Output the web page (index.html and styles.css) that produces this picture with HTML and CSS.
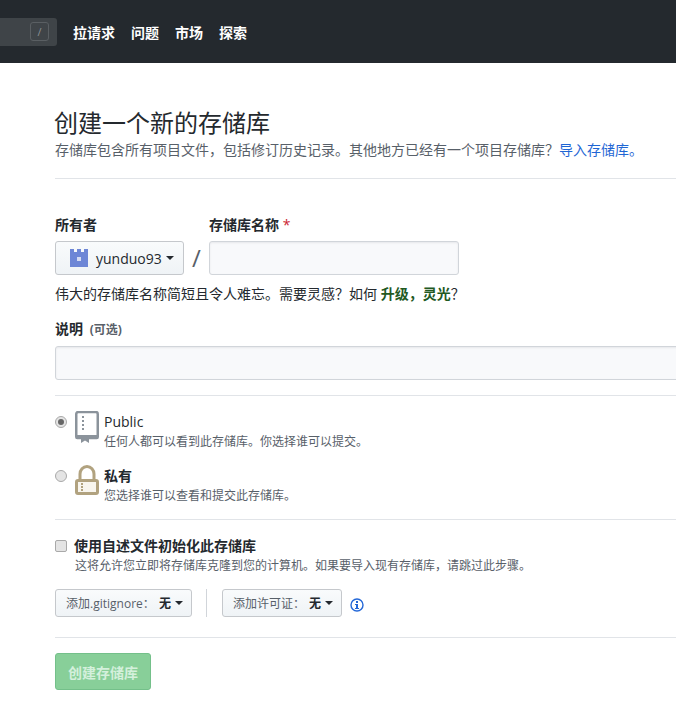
FILE: index.html
```html
<!DOCTYPE html>
<html lang="zh">
<head>
<meta charset="utf-8">
<title>创建一个新的存储库</title>
<link rel="stylesheet" href="styles.css">
</head>
<body>
<header class="topbar">
  <div class="search"><span class="slash">/</span></div>
  <nav class="nav"><a>拉请求</a><a>问题</a><a>市场</a><a>探索</a></nav>
</header>
<main class="page">
  <div class="head">
    <h1>创建一个新的存储库</h1>
    <p>存储库包含所有项目文件，包括修订历史记录。其他地方已经有一个项目存储库？<a class="link">导入存储库。</a></p>
  </div>
  <div class="owner-row">
    <div class="field">
      <label class="lbl">所有者</label>
      <button class="owner">
        <svg class="avatar" width="18" height="18" viewBox="0 0 18 18"><path fill="#6d86d6" d="M0 0h4v3h3V0h4v3h3V0h4v18H0z"/><rect x="7" y="8" width="4" height="4" fill="#d5dcf3"/></svg>
        <span>yunduo93</span><i class="caret"></i>
      </button>
    </div>
    <span class="sep">/</span>
    <div class="field">
      <label class="lbl">存储库名称 <span class="req">*</span></label>
      <div class="input name"></div>
    </div>
  </div>
  <p class="hint">伟大的存储库名称简短且令人难忘。需要灵感？如何 <b>升级，灵光</b>？</p>
  <label class="lbl desc-lbl">说明 <small>(可选)</small></label>
  <div class="input desc"></div>
  <hr class="rule r1">
  <div class="opt public">
    <i class="radio on"></i>
    <svg class="big" width="24" height="32" viewBox="0 0 24 32"><path fill="none" stroke="#8b939b" stroke-width="2.500" stroke-linejoin="round" d="M1.250 3a2 2 0 0 1 2-2h17.500a2 2 0 0 1 2 2v23a1 1 0 0 1-1 1H2.250a1 1 0 0 1-1-1z"/><path fill="#8b939b" d="M1 24h22v4H1z"/><path fill="#8b939b" d="M6 27h8v5l-4-2.500L6 32z"/><path fill="#8b939b" d="M7 5h2v2H7zm0 4h2v2H7zm0 4h2v2H7zm0 4h2v2H7z"/></svg>
    <div><strong>Public</strong><span>任何人都可以看到此存储库。你选择谁可以提交。</span></div>
  </div>
  <div class="opt private">
    <i class="radio"></i>
    <svg class="big" width="24" height="32" viewBox="0 0 24 32"><path fill="none" stroke="#b1a27f" stroke-width="3" d="M5 15V9c0-4 3-7.500 7-7.500s7 3.500 7 7.500v6"/><rect x="1.500" y="15.500" width="21" height="13" rx="1.500" fill="#f8f5ee" stroke="#b1a27f" stroke-width="3"/><path fill="#b1a27f" d="M6 18h2v2H6zm0 3h2v2H6zm0 3h2v2H6z"/></svg>
    <div><strong>私有</strong><span>您选择谁可以查看和提交此存储库。</span></div>
  </div>
  <hr class="rule r2">
  <div class="init">
    <i class="check"></i>
    <div><strong>使用自述文件初始化此存储库</strong><span>这将允许您立即将存储库克隆到您的计算机。如果要导入现有存储库，请跳过此步骤。</span></div>
  </div>
  <div class="adds">
    <button class="add add-ig">添加.gitignore： <b>无</b><i class="caret"></i></button>
    <span class="vline"></span>
    <button class="add add-lic">添加许可证： <b>无</b><i class="caret"></i></button>
    <svg class="info" width="14" height="14" viewBox="0 0 14 14"><circle cx="7" cy="7" r="6" fill="none" stroke="#2468d8" stroke-width="1.400"/><path fill="#2468d8" d="M6 3h2v2H6zM5 6h3v4h1v1H5v-1h1V7H5z"/></svg>
  </div>
  <hr class="rule r3">
  <button class="submit">创建存储库</button>
</main>
</body>
</html>
```
FILE: styles.css
```css
* { box-sizing: border-box; }
html, body { margin: 0; padding: 0; height: 703px; overflow: hidden; }
body { font-family: "Open Sans", "Noto Sans CJK SC", sans-serif; font-size: 14px; color: #24292e; background: #fff; }
.topbar { height: 63px; background: #24292e; display: flex; align-items: center; }
.search { width: 57px; height: 28px; background: #3f4448; border-radius: 0 3px 3px 0; display: flex; justify-content: flex-end; align-items: center; padding-right: 8px; }
.slash { width: 19px; height: 19px; border: 1px solid #5a5f63; border-radius: 3px; color: #8b8f93; font-size: 11px; line-height: 17px; text-align: center; }
.nav { display: flex; gap: 16px; margin-left: 16px; color: #fff; font-weight: 700; font-size: 14px; }
.page { padding-left: 55px; width: 676px; overflow: hidden; }
.head { height: 116px; padding-top: 45px; border-bottom: 1px solid #e1e4e8; }
h1 { margin: 0; font-size: 24px; font-weight: 400; line-height: 28px; position: relative; top: 1px; margin-left: -1px; }
.head p { margin: 5px 0 0; color: #586069; line-height: 18px; }
.link { color: #1f66d4; }
.owner-row { display: flex; margin-top: 36px; }
.field { display: flex; flex-direction: column; }
.lbl { font-weight: 700; font-size: 14px; line-height: 20px; display: block; }
.req { color: #cb2431; font-weight: 400; }
.owner { margin-top: 6px; width: 129px; height: 34px; border: 1px solid #c5c8cc; border-radius: 3px; background: linear-gradient(#f9fbfc, #eff3f6); display: flex; align-items: center; padding: 0 0 0 14px; font: inherit; color: #24292e; }
.avatar { margin-right: 8px; }
.caret { display: inline-block; width: 0; height: 0; margin-left: 4px; border: 4px solid transparent; border-top-color: #24292e; border-bottom: 0; }
.sep { width: 25px; font-size: 24px; color: #586069; margin-top: 26px; padding-left: 8px; line-height: 34px; }
.input { background: #f8f9fb; border: 1px solid #d1d5da; border-radius: 3px; box-shadow: inset 0 1px 2px rgba(27,31,35,.075); }
.name { margin-top: 6px; width: 250px; height: 34px; }
.hint { margin: 9px 0 0; line-height: 20px; font-size: 14px; color: #24292e; }
.hint b { color: #22591f; }
.desc-lbl { margin-top: 15px; }
.desc-lbl small { font-size: 12px; color: #586069; font-weight: 700; margin-left: 3px; }
.desc { margin-top: 6px; width: 640px; height: 34px; }
.rule { border: 0; border-top: 1px solid #e1e4e8; margin: 0; }
.r1 { margin-top: 15px; }
.opt { display: flex; position: relative; height: 54px; align-items: flex-start; }
.public { margin-top: 15px; }
.radio { width: 12px; height: 12px; border-radius: 50%; border: 1px solid #a9a9a9; background: #e4e4e4; margin-top: 5px; margin-right: 8px; flex: none; position: relative; }
.radio.on::after { content: ""; position: absolute; left: 2px; top: 2px; width: 6px; height: 6px; border-radius: 50%; background: #666; }
.big { flex: none; margin-right: 5px; }
.opt strong { display: block; font-size: 14px; line-height: 18px; margin-top: 2px; }
.public strong { font-weight: 400; }
.opt span, .init span { display: block; font-size: 12px; color: #586069; line-height: 18px; margin-top: 2px; }
.r2 { margin-top: 0; }
.init { display: flex; margin-top: 17px; }
.check { width: 12px; height: 12px; border: 1px solid #a9a9a9; border-radius: 2px; background: #e4e4e4; margin-top: 3px; margin-right: 8px; flex: none; }
.init strong { display: block; font-size: 14px; line-height: 18px; margin-left: -1px; }
.adds { display: flex; align-items: center; margin-top: 14px; }
.add { height: 28px; padding: 0 0 0 2px; justify-content: center; border: 1px solid #c5c8cc; border-radius: 3px; background: linear-gradient(#f9fbfc, #eff3f6); font: inherit; font-size: 12px; color: #586069; display: flex; align-items: center; white-space: pre; }
.add-ig { width: 137px; }
.add-lic { width: 120px; }
.add b { color: #24292e; margin-left: 1px; }
.vline { width: 1px; height: 28px; background: #d1d5da; margin: 0 15px 0 14px; }
.info { margin-left: 8px; margin-top: 3px; }
.r3 { margin-top: 20px; }
.submit { display: block; margin-top: 15px; width: 96px; height: 37px; border: 1px solid #74c08a; border-radius: 3px; background: #88cf99; color: #d4f0dc; font: inherit; font-weight: 700; }
```
